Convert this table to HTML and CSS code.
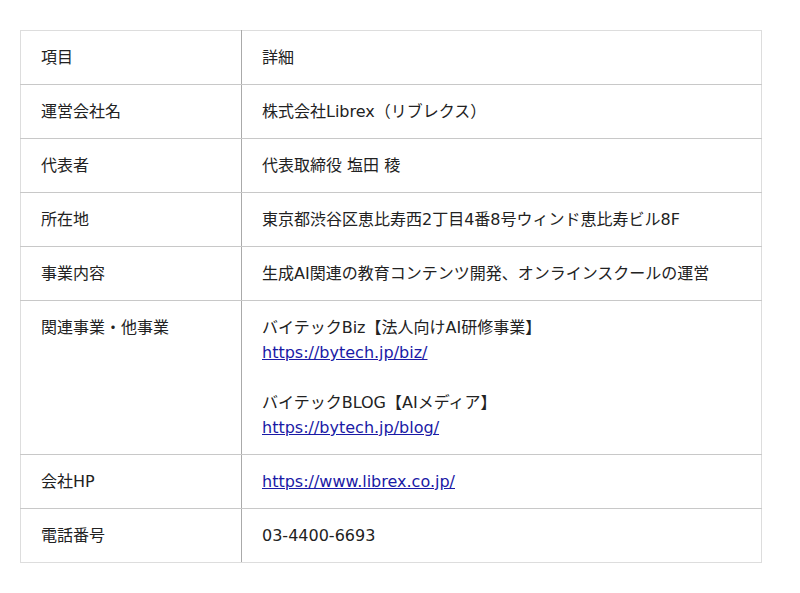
FILE: index.html
```html
<!DOCTYPE html>
<html lang="ja">
<head>
<meta charset="utf-8">
<link rel="stylesheet" href="styles.css">
</head>
<body>
<div class="page">
<table class="info">
<tbody>
<tr><td class="k">項目</td><td class="v">詳細</td></tr>
<tr><td class="k">運営会社名</td><td class="v">株式会社Librex（リブレクス）</td></tr>
<tr><td class="k">代表者</td><td class="v">代表取締役 塩田 稜</td></tr>
<tr><td class="k">所在地</td><td class="v">東京都渋谷区恵比寿西2丁目4番8号ウィンド恵比寿ビル8F</td></tr>
<tr><td class="k">事業内容</td><td class="v">生成AI関連の教育コンテンツ開発、オンラインスクールの運営</td></tr>
<tr><td class="k">関連事業・他事業</td><td class="v">バイテックBiz【法人向けAI研修事業】<br><a href="#">https://bytech.jp/biz/</a><br><br>バイテックBLOG【AIメディア】<br><a href="#">https://bytech.jp/blog/</a></td></tr>
<tr><td class="k">会社HP</td><td class="v"><a href="#">https://www.librex.co.jp/</a></td></tr>
<tr><td class="k">電話番号</td><td class="v">03-4400-6693</td></tr>
</tbody>
</table>
</div>
</body>
</html>
```

FILE: styles.css
```css
html, body {
  margin: 0;
  padding: 0;
  background: #fff;
}
.page {
  padding: 30px 20px;
}
.info {
  width: 742px;
  border-collapse: collapse;
  border: 1px solid #ddd;
  font-family: "DejaVu Sans", "Noto Sans CJK JP", sans-serif;
  font-size: 16px;
  line-height: 25px;
  color: #222;
}
.info td {
  padding: 14px 20px;
  vertical-align: top;
  border-bottom: 1px solid #c8c8c8;
  text-align: left;
}
.info tr:last-child td {
  border-bottom: 1px solid #ddd;
}
.info .k {
  width: 180px;
  border-right: 1px solid #aaa;
}
.info a {
  color: #1a1aa6;
  text-decoration: underline;
}
```
